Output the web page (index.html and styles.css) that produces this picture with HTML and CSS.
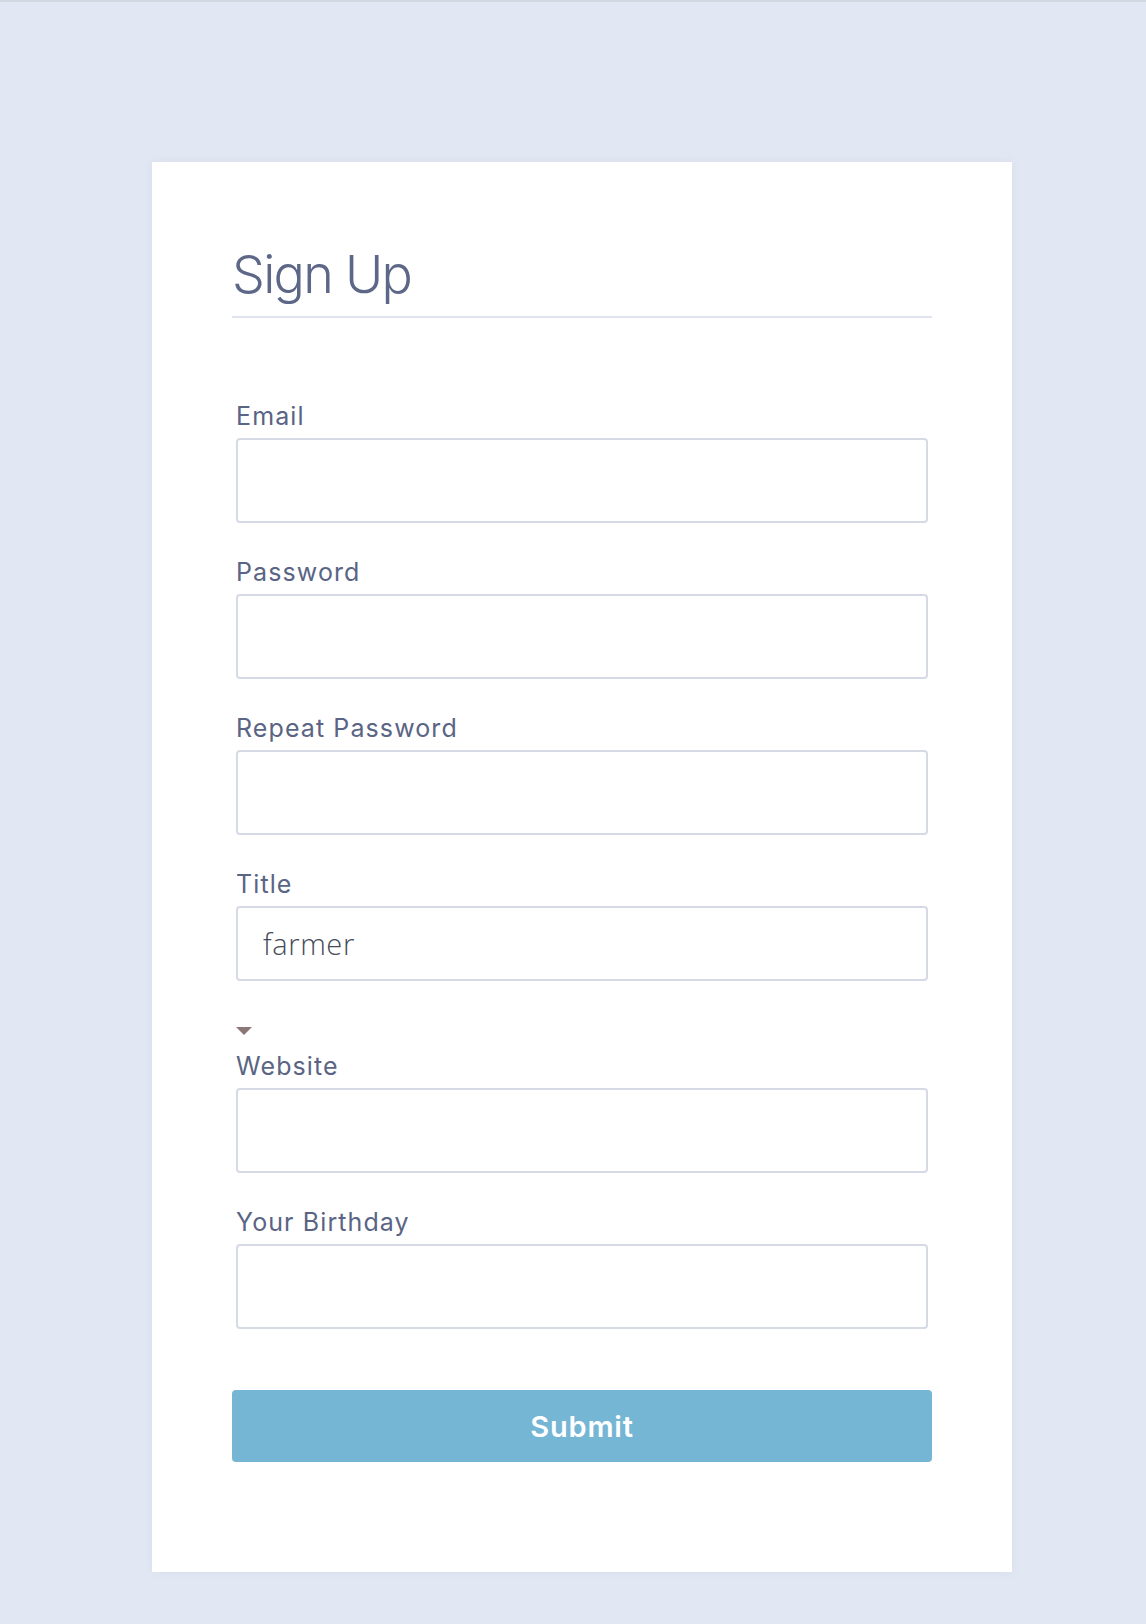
FILE: index.html
```html
<!DOCTYPE html>
<html lang="en">
<head>
<meta charset="utf-8">
<title>Sign Up</title>
<link rel="stylesheet" href="styles.css">
</head>
<body>
<div class="topline"></div>
<main class="page">
  <section class="card">
    <h1 class="title">Sign Up</h1>
    <form class="form">
      <div class="field">
        <label class="label" for="email">Email</label>
        <input class="input" id="email" type="email">
      </div>
      <div class="field">
        <label class="label" for="pw">Password</label>
        <input class="input" id="pw" type="password">
      </div>
      <div class="field">
        <label class="label" for="pw2">Repeat Password</label>
        <input class="input" id="pw2" type="password">
      </div>
      <div class="field">
        <label class="label" for="job">Title</label>
        <input class="input input-short" id="job" type="text" value="farmer">
      </div>
      <div class="toggle"><span class="caret"></span></div>
      <div class="field">
        <label class="label" for="web">Website</label>
        <input class="input" id="web" type="text">
      </div>
      <div class="field">
        <label class="label" for="bday">Your Birthday</label>
        <input class="input" id="bday" type="text">
      </div>
      <button class="submit" type="button">Submit</button>
    </form>
  </section>
</main>
</body>
</html>
```
FILE: styles.css
```css
* { box-sizing: border-box; }

html, body {
  margin: 0;
  padding: 0;
}

body {
  background: #e2e8f3;
  font-family: "Inter", "Liberation Sans", sans-serif;
  min-height: 1624px;
}

.topline {
  height: 2px;
  background: #d4d8e0;
}

.page {
  padding: 160px 0 0 152px;
}

.card {
  width: 860px;
  height: 1410px;
  background: #ffffff;
  padding: 80px 80px 0;
  box-shadow: 0 0 10px rgba(120, 135, 170, 0.10);
}

.title {
  margin: 0;
  font-size: 52px;
  font-weight: 350;
  line-height: 65px;
  color: #5d6787;
  padding-bottom: 9px;
  border-bottom: 2px solid #dfe4ee;
  letter-spacing: -1.7px;
}

.form {
  padding: 83px 4px 0;
  display: flex;
  flex-direction: column;
}

.field {
  display: flex;
  flex-direction: column;
  gap: 7px;
  margin-bottom: 34px;
}

.label {
  font-size: 25px;
  line-height: 30px;
  color: #5a6484;
  font-weight: 400;
  letter-spacing: 1.1px;
}

.input {
  display: block;
  width: 100%;
  height: 85px;
  border: 2px solid #d6dae6;
  border-radius: 4px;
  background: #ffffff;
  padding: 0 25px;
  font-family: "Open Sans", "Lato", sans-serif;
  font-weight: 300;
  font-size: 29px;
  letter-spacing: 0.6px;
  color: #464b5a;
  outline: none;
}

.input-short {
  height: 75px;
}

.toggle {
  height: 36px;
  padding-top: 12px;
}

.caret {
  display: block;
  width: 0;
  height: 0;
  border-left: 8px solid transparent;
  border-right: 8px solid transparent;
  border-top: 8px solid #8b7777;
}

.submit {
  margin: 27px -4px 0;
  height: 72px;
  border: none;
  border-radius: 4px;
  background: #76b6d5;
  color: #ffffff;
  font-family: "Inter", "Liberation Sans", sans-serif;
  font-weight: 600;
  font-size: 29px;
  letter-spacing: 0.8px;
  cursor: pointer;
}
```
